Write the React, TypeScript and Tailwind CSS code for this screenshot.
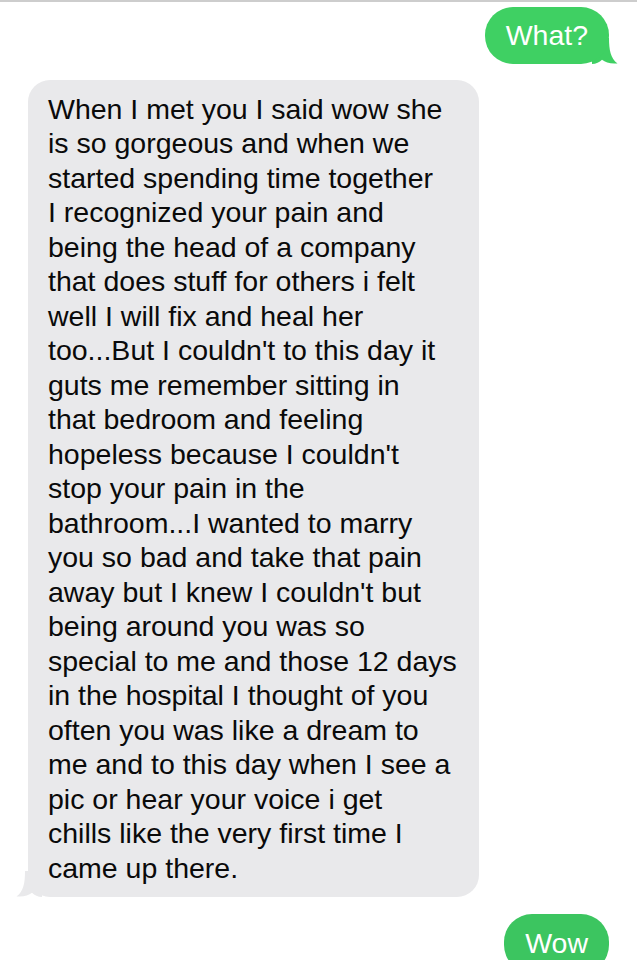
import React from "react";

const lines = [
  "When I met you I said wow she",
  "is so gorgeous and when we",
  "started spending time together",
  "I recognized your pain and",
  "being the head of a company",
  "that does stuff for others i felt",
  "well I will fix and heal her",
  "too...But I couldn't to this day it",
  "guts me remember sitting in",
  "that bedroom and feeling",
  "hopeless because I couldn't",
  "stop your pain in the",
  "bathroom...I wanted to marry",
  "you so bad and take that pain",
  "away but I knew I couldn't but",
  "being around you was so",
  "special to me and those 12 days",
  "in the hospital I thought of you",
  "often you was like a dream to",
  "me and to this day when I see a",
  "pic or hear your voice i get",
  "chills like the very first time I",
  "came up there.",
];

function Tail({ color, side }: { color: string; side: "left" | "right" }) {
  return (
    <svg
      width="26"
      height="26"
      viewBox="0 0 26 26"
      className={
        side === "right"
          ? "absolute bottom-0 right-[-9px]"
          : "absolute bottom-0 left-[-12px] scale-x-[-1]"
      }
    >
      <path
        d="M0 0 H17 C17 12 18.5 20.5 25.5 25.4 C19 26.2 13.5 24.6 10 21.8 C7.5 24.4 4 26 0 26 Z"
        fill={color}
      />
    </svg>
  );
}

export default function App() {
  return (
    <div
      className="w-[637px] h-[960px] overflow-hidden bg-white border-t-2 border-[#cdcdcd] flex flex-col"
      style={{ fontFamily: '"Liberation Sans", Arial, sans-serif' }}
    >
      <div className="self-end mr-[28px] mt-[5px] relative">
        <div className="relative z-10 bg-[#3fd063] text-white rounded-[28px] px-[21px] py-[11px] text-[28.5px] leading-[34.5px]">
          What?
        </div>
        <Tail color="#3fd063" side="right" />
      </div>

      <div className="ml-[28px] mt-[16px] relative w-[451px]">
        <div className="relative z-10 bg-[#e9e9eb] text-[#0a0a0a] rounded-[22px] pl-[20px] pr-[10px] py-[12px] text-[28.5px] leading-[34.5px]">
          {lines.map((l, i) => (
            <div key={i} className="whitespace-nowrap">
              {l}
            </div>
          ))}
        </div>
        <Tail color="#e9e9eb" side="left" />
      </div>

      <div className="self-end mr-[28px] mt-[17px] relative">
        <div className="bg-[#3cc560] text-white rounded-[28px] px-[21px] py-[12px] text-[28.5px] leading-[34.5px]">
          Wow
        </div>
      </div>
    </div>
  );
}
